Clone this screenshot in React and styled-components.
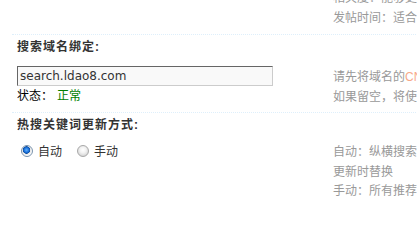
import styled, { createGlobalStyle } from "styled-components";

const GlobalStyle = createGlobalStyle`
  html, body {
    margin: 0;
    padding: 0;
    background: #fff;
    overflow: hidden;
  }
  body {
    font: 12px "Liberation Sans", "Noto Sans CJK SC", sans-serif;
    color: #333;
  }
`;

const Table = styled.div`
  width: 760px;
  margin-top: -12px;
  padding-left: 12px;
`;

const Row = styled.div`
  display: flex;
  padding-bottom: ${(p) => p.$pb || 0}px;
`;

const TitleRow = styled.div`
  border-top: 1px dotted #deeffb;
  padding: 3px 5px;
  line-height: 19px;
  font-weight: bold;
  letter-spacing: 1px;
  color: #333;
`;

const FormCell = styled.div`
  width: 316px;
  flex-shrink: 0;
  padding: ${(p) => p.$pt || 0}px 0 0 5px;
`;

const Tips = styled.div`
  padding-top: ${(p) => p.$pt || 0}px;
  color: #999;
  line-height: ${(p) => p.$lh || 20}px;
  white-space: nowrap;

  em {
    font-style: normal;
    color: #f7a98a;
  }
`;

const TextInput = styled.input`
  display: block;
  box-sizing: border-box;
  width: 256px;
  height: 20px;
  margin: 0;
  padding: 0 2px;
  border: 1px solid;
  border-color: #666 #ccc #ccc #666;
  background: #f9f9f9;
  font: 12px "DejaVu Sans", Verdana, sans-serif;
  color: #333;
  outline: none;
`;

const Status = styled.div`
  line-height: 20px;
  color: #000;

  span {
    margin-left: 4px;
    color: #008000;
  }
`;

const RadioLine = styled.div`
  display: flex;
  align-items: center;
  height: 19px;
  padding-left: 4px;
`;

const RadioLabel = styled.label`
  display: flex;
  align-items: center;
  margin-right: 15px;
  color: #333;
`;

const RadioMark = styled.span`
  box-sizing: border-box;
  width: 12px;
  height: 12px;
  margin-right: 5px;
  border-radius: 50%;
  border: 1px solid ${(p) => (p.$checked ? "#7a93ad" : "#a8a8a8")};
  background: ${(p) =>
    p.$checked
      ? "radial-gradient(circle at 45% 40%, #5fb2ff 0, #1a6ed8 2.5px, #0f4f9e 3.5px, #e8e8e8 4px, #fff 6px)"
      : "radial-gradient(circle at 50% 40%, #fff 0, #f2f2f2 3px, #d6d6d6 6px)"};
`;

export default function App() {
  return (
    <>
      <GlobalStyle />
      <Table>
        <Row $pb={6}>
          <FormCell />
          <Tips>
            <div>相关度：能够更准确地找到相关的帖子</div>
            <div>发帖时间：适合查找最新发表的帖子</div>
          </Tips>
        </Row>

        <TitleRow>搜索域名绑定:</TitleRow>
        <Row $pb={5}>
          <FormCell $pt={6}>
            <TextInput defaultValue="search.ldao8.com" />
            <Status>
              状态：<span>正常</span>
            </Status>
          </FormCell>
          <Tips $pt={7}>
            <div>
              请先将域名的<em>CNAME</em>记录指向 search.discuz.qq.com
            </div>
            <div>如果留空，将使用默认的搜索域名</div>
          </Tips>
        </Row>

        <TitleRow>热搜关键词更新方式:</TitleRow>
        <Row>
          <FormCell $pt={3}>
            <RadioLine>
              <RadioLabel>
                <RadioMark $checked />
                自动
              </RadioLabel>
              <RadioLabel>
                <RadioMark />
                手动
              </RadioLabel>
            </RadioLine>
          </FormCell>
          <Tips $pt={5} $lh={19.5}>
            <div>自动：纵横搜索将根据搜索热度自动</div>
            <div>更新时替换</div>
            <div>手动：所有推荐的热搜关键词由您设置</div>
          </Tips>
        </Row>
      </Table>
    </>
  );
}
